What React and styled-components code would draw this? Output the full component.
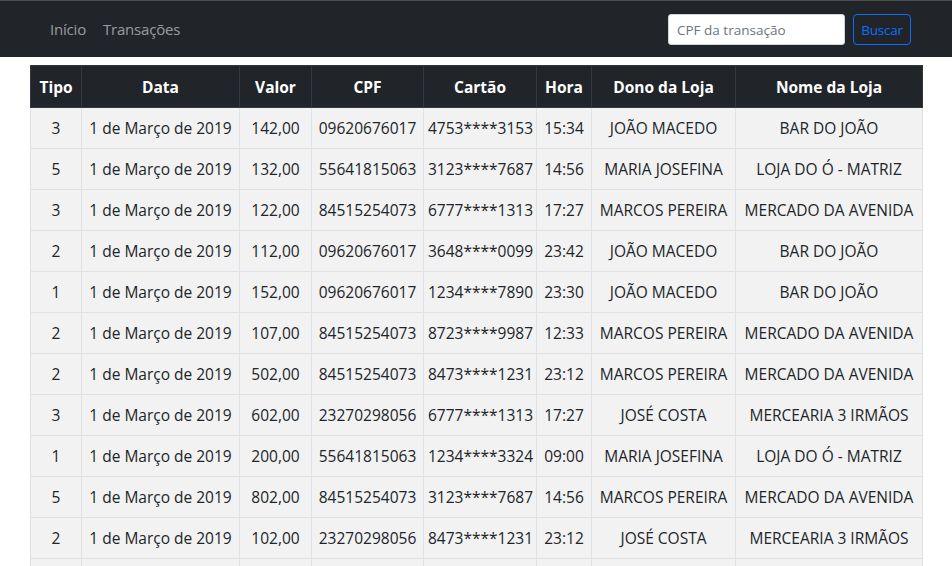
import styled, { createGlobalStyle } from "styled-components";

const GlobalStyle = createGlobalStyle`
  body {
    margin: 0;
    background: #fff;
    font-family: "Open Sans", "Noto Sans", sans-serif;
    color: #212529;
  }
`;

const columns = [
  { key: "tipo", label: "Tipo", width: 51 },
  { key: "data", label: "Data", width: 158 },
  { key: "valor", label: "Valor", width: 72 },
  { key: "cpf", label: "CPF", width: 112 },
  { key: "cartao", label: "Cartão", width: 113 },
  { key: "hora", label: "Hora", width: 55 },
  { key: "dono", label: "Dono da Loja", width: 144 },
  { key: "loja", label: "Nome da Loja", width: 187 },
];

const transacoes = [
  ["3", "142,00", "09620676017", "4753****3153", "15:34", "JOÃO MACEDO", "BAR DO JOÃO"],
  ["5", "132,00", "55641815063", "3123****7687", "14:56", "MARIA JOSEFINA", "LOJA DO Ó - MATRIZ"],
  ["3", "122,00", "84515254073", "6777****1313", "17:27", "MARCOS PEREIRA", "MERCADO DA AVENIDA"],
  ["2", "112,00", "09620676017", "3648****0099", "23:42", "JOÃO MACEDO", "BAR DO JOÃO"],
  ["1", "152,00", "09620676017", "1234****7890", "23:30", "JOÃO MACEDO", "BAR DO JOÃO"],
  ["2", "107,00", "84515254073", "8723****9987", "12:33", "MARCOS PEREIRA", "MERCADO DA AVENIDA"],
  ["2", "502,00", "84515254073", "8473****1231", "23:12", "MARCOS PEREIRA", "MERCADO DA AVENIDA"],
  ["3", "602,00", "23270298056", "6777****1313", "17:27", "JOSÉ COSTA", "MERCEARIA 3 IRMÃOS"],
  ["1", "200,00", "55641815063", "1234****3324", "09:00", "MARIA JOSEFINA", "LOJA DO Ó - MATRIZ"],
  ["5", "802,00", "84515254073", "3123****7687", "14:56", "MARCOS PEREIRA", "MERCADO DA AVENIDA"],
  ["2", "102,00", "23270298056", "8473****1231", "23:12", "JOSÉ COSTA", "MERCEARIA 3 IRMÃOS"],
  ["4", "109,00", "84515254073", "6228****9090", "00:00", "MARCOS PEREIRA", "MERCADO DA AVENIDA"],
];

const Navbar = styled.nav`
  display: flex;
  align-items: center;
  justify-content: space-between;
  height: 56px;
  padding: 0 41px 0 50px;
  background: #212529;
  border-top: 1px solid #4a4d50;
`;

const NavLinks = styled.div`
  display: flex;
  gap: 17px;
`;

const NavLink = styled.a`
  color: rgba(255, 255, 255, 0.55);
  font-size: 15px;
  text-decoration: none;
  letter-spacing: -0.2px;
`;

const SearchForm = styled.form`
  display: flex;
  gap: 8px;
  margin-top: 1px;
`;

const SearchInput = styled.input`
  box-sizing: border-box;
  width: 177px;
  height: 31px;
  padding: 0 8px;
  border: 1px solid #ced4da;
  border-radius: 3px;
  font-family: inherit;
  font-size: 13.5px;
  color: #212529;
  background: #fff;
  &::placeholder {
    color: #6c757d;
  }
`;

const SearchButton = styled.button`
  box-sizing: border-box;
  width: 58px;
  height: 31px;
  padding: 0;
  border: 1px solid #0d6efd;
  border-radius: 4px;
  background: transparent;
  color: #0d6efd;
  font-family: inherit;
  font-size: 13.5px;
  letter-spacing: -0.2px;
`;

const Main = styled.main`
  padding: 8px 30px 0;
`;

const Table = styled.table`
  width: 892px;
  table-layout: fixed;
  border-collapse: collapse;
  font-size: 15.5px;
`;

const HeadCell = styled.th`
  height: 41px;
  padding: 0 4px;
  background: #212529;
  color: #fff;
  font-weight: 700;
  text-align: center;
  white-space: nowrap;
  border: 1px solid #32383e;
`;

const Row = styled.tr`
  background: #f2f2f2;
`;

const Cell = styled.td`
  height: 40px;
  padding: 0 4px;
  text-align: center;
  white-space: nowrap;
  border: 1px solid #dee2e6;
  color: #212529;
`;

export default function App() {
  return (
    <>
      <GlobalStyle />
      <Navbar>
        <NavLinks>
          <NavLink href="#">Início</NavLink>
          <NavLink href="#">Transações</NavLink>
        </NavLinks>
        <SearchForm onSubmit={(e) => e.preventDefault()}>
          <SearchInput placeholder="CPF da transação" />
          <SearchButton type="submit">Buscar</SearchButton>
        </SearchForm>
      </Navbar>
      <Main>
        <Table>
          <colgroup>
            {columns.map((c) => (
              <col key={c.key} style={{ width: c.width }} />
            ))}
          </colgroup>
          <thead>
            <tr>
              {columns.map((c) => (
                <HeadCell key={c.key}>{c.label}</HeadCell>
              ))}
            </tr>
          </thead>
          <tbody>
            {transacoes.map((t, i) => (
              <Row key={i}>
                <Cell>{t[0]}</Cell>
                <Cell>1 de Março de 2019</Cell>
                {t.slice(1).map((v, j) => (
                  <Cell key={j}>{v}</Cell>
                ))}
              </Row>
            ))}
          </tbody>
        </Table>
      </Main>
    </>
  );
}
